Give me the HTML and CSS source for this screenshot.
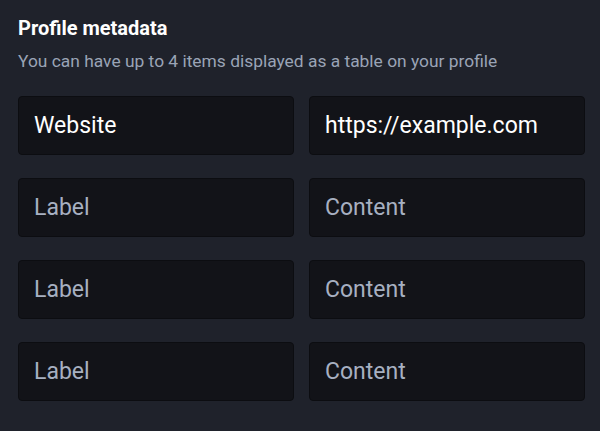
FILE: index.html
```html
<!DOCTYPE html>
<html lang="en">
<head>
<meta charset="utf-8">
<link rel="stylesheet" href="styles.css">
</head>
<body>
<section class="panel">
  <h2 class="title">Profile metadata</h2>
  <p class="hint">You can have up to 4 items displayed as a table on your profile</p>
  <div class="grid">
    <input class="field" type="text" value="Website" placeholder="Label">
    <input class="field" type="text" value="https://example.com" placeholder="Content">
    <input class="field" type="text" placeholder="Label">
    <input class="field" type="text" placeholder="Content">
    <input class="field" type="text" placeholder="Label">
    <input class="field" type="text" placeholder="Content">
    <input class="field" type="text" placeholder="Label">
    <input class="field" type="text" placeholder="Content">
  </div>
</section>
</body>
</html>
```
FILE: styles.css
```css
html, body {
  margin: 0;
  padding: 0;
  background: #1f222b;
  width: 600px;
  height: 431px;
  overflow: hidden;
}
.panel {
  padding: 16px 15px 0 18px;
  font-family: Roboto, "Noto Sans", sans-serif;
}
.title {
  margin: 0;
  font-size: 20px;
  font-weight: 700;
  line-height: 24px;
  color: #ffffff;
}
.hint {
  margin: 10px 0 0 0;
  font-size: 17.4px;
  line-height: 22px;
  color: #9aa4b6;
}
.grid {
  margin-top: 24px;
  display: grid;
  grid-template-columns: 1fr 1fr;
  column-gap: 15px;
  row-gap: 23px;
}
.field {
  box-sizing: border-box;
  height: 59px;
  width: 100%;
  margin: 0;
  padding: 0 15px;
  background: #121318;
  border: 1px solid #0c0d11;
  border-radius: 4px;
  color: #ffffff;
  font-family: Roboto, "Noto Sans", sans-serif;
  font-size: 23px;
  outline: none;
}
.field::placeholder {
  color: #a7b0c1;
  opacity: 1;
}
```
